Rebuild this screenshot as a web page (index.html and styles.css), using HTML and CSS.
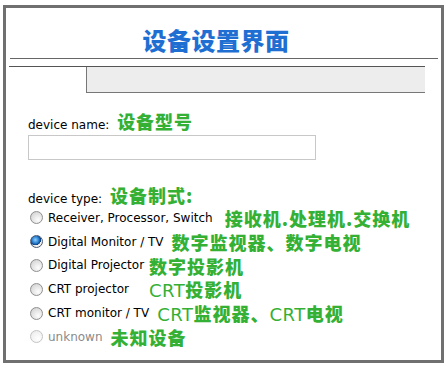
FILE: index.html
```html
<!DOCTYPE html>
<html lang="zh">
<head>
  <meta charset="UTF-8">
  <title>设备设置界面</title>
  <link rel="stylesheet" href="styles.css">
</head>
<body>
  <div class="frame">
    <div class="title">设备设置界面</div>

    <div class="tabs">
      <div class="tab active"></div>
      <div class="tab rest"></div>
    </div>

    <div class="form">
      <div class="label">device name: <span class="note">设备型号</span></div>
      <input type="text" class="name-input">

      <div class="label type-label">device type: <span class="note">设备制式:</span></div>

      <label class="row">
        <input type="radio" name="type">
        <span>Receiver, Processor, Switch</span>
        <span class="note far">接收机.处理机.交换机</span>
      </label>
      <label class="row">
        <input type="radio" name="type" checked>
        <span>Digital Monitor / TV</span>
        <span class="note">数字监视器、数字电视</span>
      </label>
      <label class="row">
        <input type="radio" name="type">
        <span>Digital Projector</span>
        <span class="note near">数字投影机</span>
      </label>
      <label class="row">
        <input type="radio" name="type">
        <span>CRT projector</span>
        <span class="note wide"><span class="latin">CRT</span>投影机</span>
      </label>
      <label class="row">
        <input type="radio" name="type">
        <span>CRT monitor / TV</span>
        <span class="note"><span class="latin">CRT</span>监视器、<span class="latin">CRT</span>电视</span>
      </label>
      <label class="row disabled">
        <input type="radio" name="type" disabled>
        <span>unknown</span>
        <span class="note">未知设备</span>
      </label>
    </div>
  </div>
</body>
</html>
```

FILE: styles.css
```css
body {
  margin: 0;
  background: #fff;
  font-family: "DejaVu Sans", Verdana, sans-serif;
  font-size: 12px;
  color: #000;
}

.frame {
  width: 435px;
  height: 352px;
  margin: 5px 0 0 3px;
  border: 3px solid #707070;
  background: #fff;
}

.title {
  margin: 0 3px 0 4px;
  padding: 16px 16px 0 0;
  height: 34px;
  line-height: 32px;
  border-bottom: 1px solid #666;
  text-align: center;
  font-family: "Noto Sans CJK SC", sans-serif;
  font-weight: 900;
  font-size: 24px;
  letter-spacing: 0.5px;
  color: #1f6fd3;
}

.tabs {
  display: flex;
  width: 416px;
  height: 26px;
  margin: 7px 0 0 3px;
  border-top: 1px solid #555;
}

.tab.active {
  width: 77px;
}

.tab.rest {
  flex: 1;
  background: #ededed;
  border-left: 1px solid #777;
  border-bottom: 1px solid #777;
}

.form {
  padding-left: 22px;
}

.label {
  margin-top: 18px;
  height: 20px;
  line-height: 20px;
}

.type-label {
  margin-top: 25px;
}

.note {
  font-family: "Noto Sans CJK SC", sans-serif;
  font-weight: 900;
  font-size: 18px;
  letter-spacing: 1px;
  color: #34b034;
  margin-left: 4px;
}

.note .latin {
  font-family: "DejaVu Sans", sans-serif;
  font-weight: normal;
  letter-spacing: 0.5px;
}

.name-input {
  display: block;
  box-sizing: border-box;
  width: 288px;
  height: 25px;
  margin: 4px 0 0;
  border: 1px solid #c8c8c8;
  background: #fff;
}

.row {
  display: flex;
  align-items: center;
  height: 23.8px;
}

.type-label + .row {
  margin-top: 1px;
}

.row .note {
  margin-left: 8px;
}

.row .note.far {
  margin-left: 12px;
}

.row .note.near {
  margin-left: 5px;
}

.row .note.wide {
  margin-left: 20px;
}

.row input {
  appearance: none;
  -webkit-appearance: none;
  box-sizing: border-box;
  width: 13px;
  height: 13px;
  margin: 0 5px 0 2px;
  border: 1px solid #8f8f8f;
  border-radius: 50%;
  background: radial-gradient(circle at 65% 70%, #fdfdfd 0, #e2e2e2 55%, #c9c9c9 100%);
}

.row input:checked {
  border-color: #4a5a70;
  background:
    radial-gradient(circle at 40% 35%, #8fd0ff 0, #2a7fd0 35%, #0b3d7c 55%, transparent 58%),
    radial-gradient(circle at 65% 70%, #fdfdfd 0, #e2e2e2 55%, #c9c9c9 100%);
}

.row.disabled {
  color: #8a8a8a;
}

.row input:disabled {
  border-color: #c4c4c4;
  background: radial-gradient(circle at 65% 70%, #ffffff 0, #f2f2f2 60%, #e4e4e4 100%);
}
```
